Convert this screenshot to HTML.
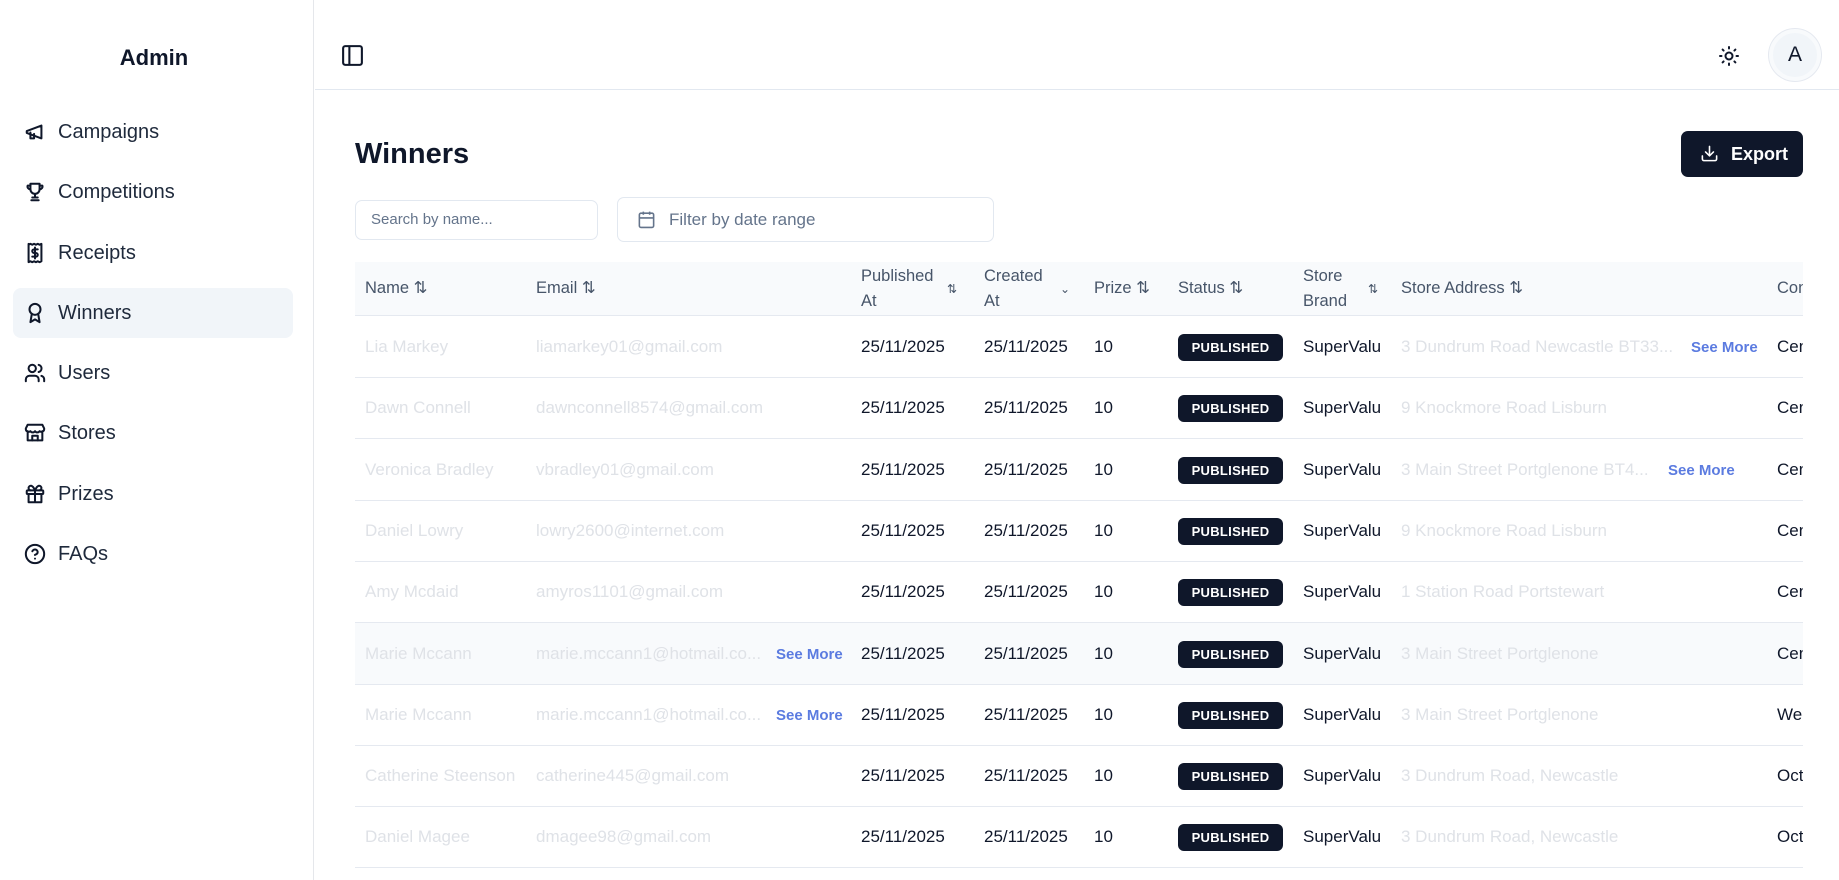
<!DOCTYPE html>
<html><head><meta charset="utf-8"><style>
*{box-sizing:border-box;margin:0;padding:0}
body{width:1839px;height:880px;overflow:hidden;background:#fff;font-family:"Liberation Sans",sans-serif;color:#0f172a;position:relative}
.a{position:absolute;white-space:nowrap}
.side{position:absolute;left:0;top:0;width:314px;height:880px;border-right:1px solid #e5e7eb}
.nav{position:absolute;left:13px;width:280px;height:50px;border-radius:8px;display:flex;align-items:center;padding-left:11px;font-size:20px;color:#1e293b}
.nav svg{width:22px;height:22px;margin-right:12px;fill:none;stroke:#0f172a;stroke-width:2.2;stroke-linecap:round;stroke-linejoin:round}
.th{position:absolute;font-size:16.5px;color:#475569;line-height:25px}
.td{position:absolute;font-size:17px;line-height:20px}
.f{color:#dfe2e7}
.sm{color:#5b7be0;font-size:15px;font-weight:bold}
.b{position:absolute;background:#0f172a;color:#fff;font-size:13px;font-weight:bold;border-radius:6px;width:105px;height:27px;line-height:27px;text-align:center;letter-spacing:.3px}
.line{position:absolute;left:355px;width:1448px;height:1px;background:#e5e9f0}
</style></head><body>
<div class="side">
<div class="a" style="left:0;width:308px;text-align:center;top:45px;font-size:22px;font-weight:bold">Admin</div>
<div class="nav" style="top:107px"><svg viewBox="0 0 24 24"><path d="M3 11l16-6v14L3 13z"/><path d="M7 12.5V19h4v-5"/></svg>Campaigns</div>
<div class="nav" style="top:167px"><svg viewBox="0 0 24 24"><path d="M7 3h10v6a5 5 0 0 1-10 0z"/><path d="M7 5H4a3 3 0 0 0 3 4M17 5h3a3 3 0 0 1-3 4M12 14v4M8 21h8M9 18h6"/></svg>Competitions</div>
<div class="nav" style="top:228px"><svg viewBox="0 0 24 24"><path d="M5 2v20l2-1 2 1 2-1 2 1 2-1 2 1 2-1V2l-2 1-2-1-2 1-2-1-2 1-2-1-2 1z"/><path d="M15 8h-4a2 2 0 0 0 0 4h2a2 2 0 0 1 0 4H9M12 6v12"/></svg>Receipts</div>
<div class="nav" style="top:288px;background:#f1f5f9"><svg viewBox="0 0 24 24"><circle cx="12" cy="8" r="6"/><path d="M8.5 13L7 22l5-3 5 3-1.5-9"/></svg>Winners</div>
<div class="nav" style="top:348px"><svg viewBox="0 0 24 24"><circle cx="9" cy="7" r="4"/><path d="M2 21v-2a4 4 0 0 1 4-4h6a4 4 0 0 1 4 4v2M16 3.1a4 4 0 0 1 0 7.8M22 21v-2a4 4 0 0 0-3-3.9"/></svg>Users</div>
<div class="nav" style="top:408px"><svg viewBox="0 0 24 24"><path d="M4 10v10h16V10M2 7l2-4h16l2 4v1a3 3 0 0 1-5 2 3 3 0 0 1-5 0 3 3 0 0 1-5 0 3 3 0 0 1-5-2z"/><path d="M9 20v-5h6v5"/></svg>Stores</div>
<div class="nav" style="top:469px"><svg viewBox="0 0 24 24"><rect x="3" y="8" width="18" height="4" rx="1"/><path d="M12 8v13M19 12v9H5v-9M7.5 8a2.5 2.5 0 0 1 0-5C10 3 12 8 12 8s2-5 4.5-5a2.5 2.5 0 0 1 0 5"/></svg>Prizes</div>
<div class="nav" style="top:529px"><svg viewBox="0 0 24 24"><circle cx="12" cy="12" r="10"/><path d="M9.1 9a3 3 0 0 1 5.8 1c0 2-3 3-3 3M12 17h.01"/></svg>FAQs</div>
</div>
<div class="a" style="left:315px;top:89px;width:1524px;height:1px;background:#e2e8f0"></div>
<svg class="a" style="left:340px;top:43px" width="25" height="25" viewBox="0 0 24 24" fill="none" stroke="#0f172a" stroke-width="2"><rect x="3" y="3" width="18" height="18" rx="2"/><path d="M9 3v18"/></svg>
<svg class="a" style="left:1717px;top:44px" width="24" height="24" viewBox="0 0 24 24" fill="none" stroke="#0f172a" stroke-width="2" stroke-linecap="round"><circle cx="12" cy="12" r="3.5"/><path d="M12 3v1.5M12 19.5V21M3 12h1.5M19.5 12H21M5.6 5.6l1 1M17.4 17.4l1 1M5.6 18.4l1-1M17.4 6.6l1-1"/></svg>
<div class="a" style="left:1769px;top:29px;width:52px;height:52px;border-radius:50%;border:4px solid #f8fafc;box-shadow:0 0 0 1px #e5e9f0;background:#f1f5f9;text-align:center;line-height:44px;font-size:21px;color:#0f172a">A</div>
<div class="a" style="left:355px;top:138px;font-size:29px;font-weight:bold">Winners</div>
<div class="a" style="left:1681px;top:131px;width:122px;height:46px;background:#0f172a;border-radius:7px;color:#fff;font-size:18px;font-weight:bold;line-height:46px;padding-left:50px">Export</div>
<svg class="a" style="left:1700px;top:144px" width="19" height="19" viewBox="0 0 24 24" fill="none" stroke="#fff" stroke-width="2" stroke-linecap="round" stroke-linejoin="round"><path d="M21 15v4a2 2 0 0 1-2 2H5a2 2 0 0 1-2-2v-4M7 10l5 5 5-5M12 15V3"/></svg>
<div class="a" style="left:355px;top:200px;width:243px;height:40px;border:1px solid #e2e8f0;border-radius:7px;font-size:15px;color:#64748b;line-height:38px;padding-left:15px">Search by name...</div>
<div class="a" style="left:617px;top:197px;width:377px;height:45px;border:1px solid #e2e8f0;border-radius:7px;font-size:17px;color:#64748b;line-height:43px;padding-left:51px">Filter by date range</div>
<svg class="a" style="left:637px;top:210px" width="19" height="19" viewBox="0 0 24 24" fill="none" stroke="#64748b" stroke-width="2"><rect x="3" y="4" width="18" height="18" rx="2"/><path d="M16 2v4M8 2v4M3 10h18"/></svg>
<div class="a" style="left:355px;top:262px;width:1448px;height:54px;background:#f8fafc"></div>
<div class="line" style="top:315px"></div>
<div class="th" style="left:365px;top:276px">Name ⇅</div>
<div class="th" style="left:536px;top:276px">Email ⇅</div>
<div class="th" style="left:861px;top:264px">Published<br>At</div><div class="th" style="left:947px;top:277px;font-size:12px">⇅</div>
<div class="th" style="left:984px;top:264px">Created<br>At</div><div class="th" style="left:1060px;top:277px;font-size:12px">⌄</div>
<div class="th" style="left:1094px;top:276px">Prize ⇅</div>
<div class="th" style="left:1178px;top:276px">Status ⇅</div>
<div class="th" style="left:1303px;top:264px">Store<br>Brand</div><div class="th" style="left:1368px;top:277px;font-size:12px">⇅</div>
<div class="th" style="left:1401px;top:276px">Store Address ⇅</div>
<div class="th" style="left:1777px;top:276px;width:26px;overflow:hidden">Con</div>
<div class="a" style="left:355px;top:623px;width:1448px;height:61px;background:#f8fafc"></div>
<div id="rows"></div>
<script>
var d=[["Lia Markey","liamarkey01@gmail.com",0,"3 Dundrum Road Newcastle BT33...",1691,"Cen"],
["Dawn Connell","dawnconnell8574@gmail.com",0,"9 Knockmore Road Lisburn",0,"Cen"],
["Veronica Bradley","vbradley01@gmail.com",0,"3 Main Street Portglenone BT4...",1668,"Cen"],
["Daniel Lowry","lowry2600@internet.com",0,"9 Knockmore Road Lisburn",0,"Cen"],
["Amy Mcdaid","amyros1101@gmail.com",0,"1 Station Road Portstewart",0,"Cen"],
["Marie Mccann","marie.mccann1@hotmail.co...",1,"3 Main Street Portglenone",0,"Cen"],
["Marie Mccann","marie.mccann1@hotmail.co...",1,"3 Main Street Portglenone",0,"Wed"],
["Catherine Steenson","catherine445@gmail.com",0,"3 Dundrum Road, Newcastle",0,"Oct"],
["Daniel Magee","dmagee98@gmail.com",0,"3 Dundrum Road, Newcastle",0,"Oct"]];
var h="";
d.forEach(function(r,i){var y=337+61.3*i;
h+='<div class="td f a" style="left:365px;top:'+y+'px;width:160px;overflow:hidden">'+r[0]+'</div>';
h+='<div class="td f a" style="left:536px;top:'+y+'px">'+r[1]+'</div>';
if(r[2])h+='<div class="td sm a" style="left:776px;top:'+(y+1)+'px">See More</div>';
h+='<div class="td a" style="left:861px;top:'+y+'px">25/11/2025</div>';
h+='<div class="td a" style="left:984px;top:'+y+'px">25/11/2025</div>';
h+='<div class="td a" style="left:1094px;top:'+y+'px">10</div>';
h+='<div class="b" style="left:1178px;top:'+(y-3)+'px">PUBLISHED</div>';
h+='<div class="td a" style="left:1303px;top:'+y+'px">SuperValu</div>';
h+='<div class="td f a" style="left:1401px;top:'+y+'px">'+r[3]+'</div>';
if(r[4])h+='<div class="td sm a" style="left:'+r[4]+'px;top:'+(y+1)+'px">See More</div>';
h+='<div class="td a" style="left:1777px;top:'+y+'px;width:26px;overflow:hidden">'+r[5]+'</div>';
h+='<div class="line" style="top:'+(y+40)+'px"></div>';});
document.getElementById("rows").innerHTML=h;
</script>
</body></html>
